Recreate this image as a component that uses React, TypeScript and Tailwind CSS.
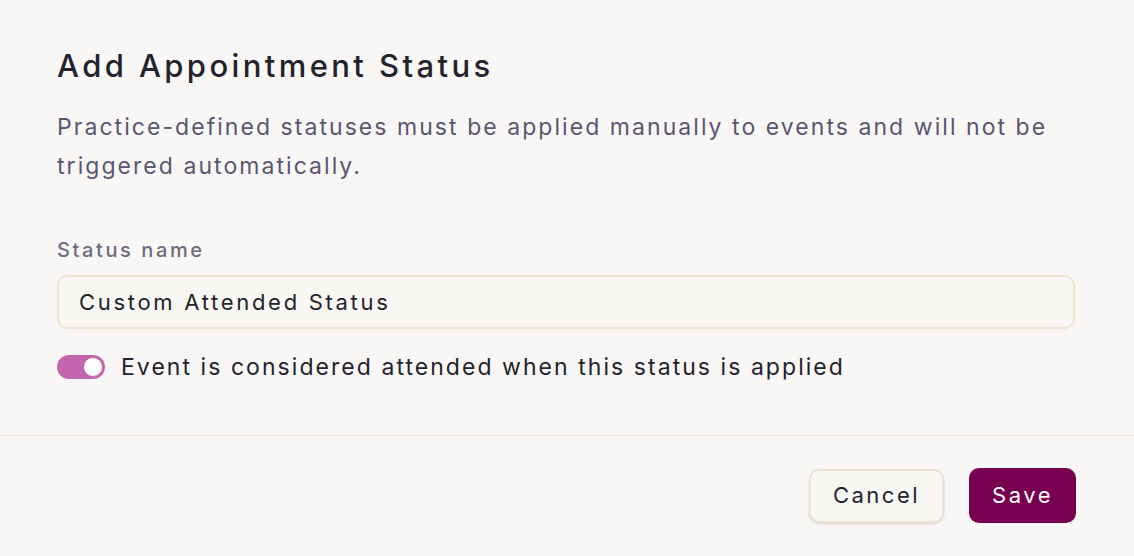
import { useState } from 'react';

export default function App() {
  const [attended, setAttended] = useState(true);

  return (
    <div className="w-[1134px] h-[556px] bg-[#f8f7f5] text-[#24222c] flex flex-col" style={{ fontFamily: 'Inter, "Open Sans", sans-serif' }}>
      {/* Body */}
      <div className="px-[57px] pt-[44px] h-[436px] border-b border-[#ebe5dd]">
        <h2 className="text-[31px] leading-[44px] font-medium tracking-[3.4px]">Add Appointment Status</h2>
        <p className="mt-[20px] text-[23px] leading-[39px] text-[#5b5570] tracking-[2.05px]">
          Practice-defined statuses must be applied manually to events and will not be triggered automatically.
        </p>

        <label className="block mt-[50px] text-[20px] leading-[28px] text-[#6f6a80] font-medium tracking-[2.6px]">Status name</label>
        <input
          className="mt-[11px] w-[1018px] h-[54px] px-[20px] rounded-[10px] border-2 border-[#ede4d6] bg-[#f9f7f3] text-[22px] tracking-[2.7px] text-[#24222c] outline-none"
          defaultValue="Custom Attended Status"
        />

        <div className="mt-[24px] flex items-center gap-[16px]">
          <button
            onClick={() => setAttended(!attended)}
            className={`w-[48px] h-[24px] rounded-full p-[2px] flex items-center ${attended ? 'bg-[#c466ae] justify-end' : 'bg-[#d9d4cc] justify-start'}`}
          >
            <span className="w-[20px] h-[20px] rounded-full bg-white border border-[#c466ae]" />
          </button>
          <span className="text-[23px] leading-[28px] tracking-[2.05px]">Event is considered attended when this status is applied</span>
        </div>
      </div>

      {/* Footer */}
      <div className="flex justify-end items-center gap-[25px] px-[58px] pt-[32px]">
        <button className="h-[54px] px-[22px] rounded-[10px] border-2 border-[#ece3d5] bg-[#f9f7f3] text-[22px] tracking-[2.5px] shadow-sm">Cancel</button>
        <button className="h-[55px] px-[23px] rounded-[10px] bg-[#770050] text-white text-[22px] tracking-[2.5px]">Save</button>
      </div>
    </div>
  );
}
